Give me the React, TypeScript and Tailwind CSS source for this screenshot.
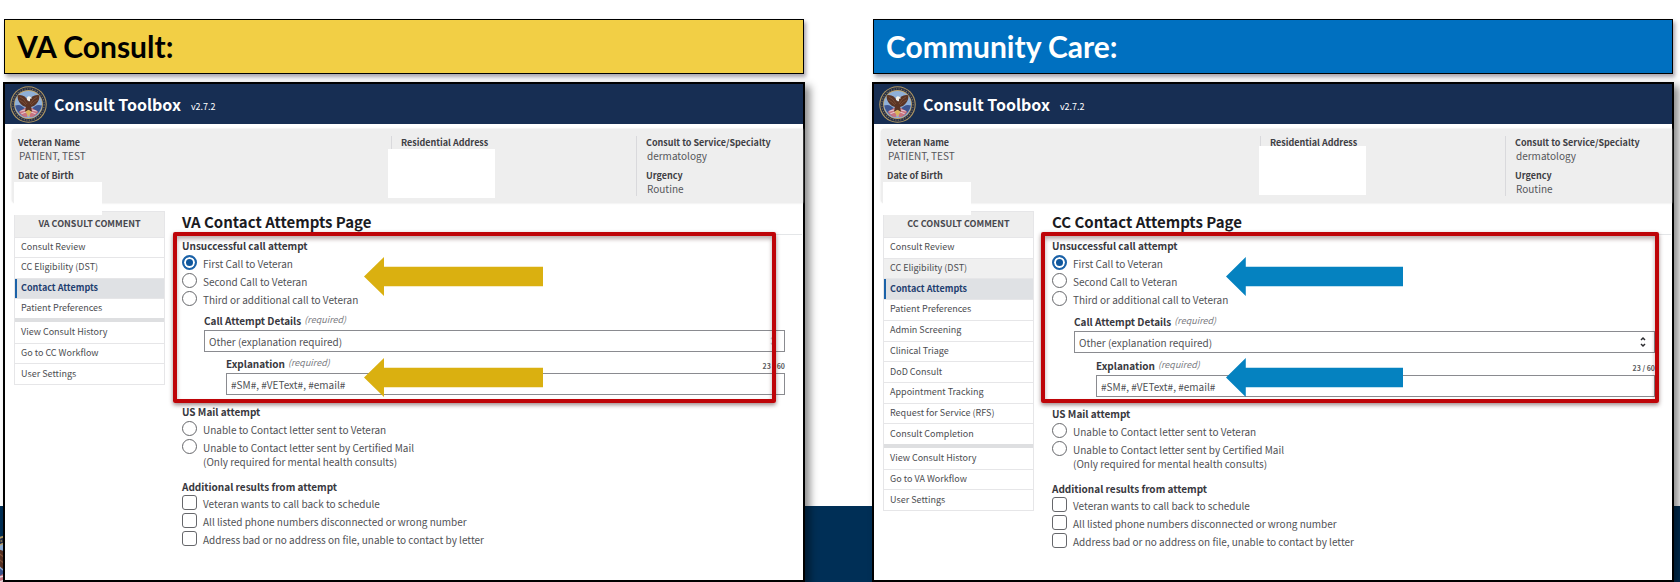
import { useState } from "react";

type Tone = "va" | "cc";

interface PanelData {
  tone: Tone;
  banner: string;
  navTitle: string;
  pages: string[];
  hovered?: string;
  links: string[];
  title: string;
}

const panels: PanelData[] = [
  {
    tone: "va",
    banner: "VA Consult:",
    navTitle: "VA CONSULT COMMENT",
    pages: ["Consult Review", "CC Eligibility (DST)", "Contact Attempts", "Patient Preferences"],
    links: ["View Consult History", "Go to CC Workflow", "User Settings"],
    title: "VA Contact Attempts Page",
  },
  {
    tone: "cc",
    banner: "Community Care:",
    navTitle: "CC CONSULT COMMENT",
    pages: [
      "Consult Review",
      "CC Eligibility (DST)",
      "Contact Attempts",
      "Patient Preferences",
      "Admin Screening",
      "Clinical Triage",
      "DoD Consult",
      "Appointment Tracking",
      "Request for Service (RFS)",
      "Consult Completion",
    ],
    hovered: "CC Eligibility (DST)",
    links: ["View Consult History", "Go to VA Workflow", "User Settings"],
    title: "CC Contact Attempts Page",
  },
];

function Seal({ className }: { className: string }) {
  return (
    <svg viewBox="0 0 72 72" className={className} aria-hidden="true">
      <circle cx="36" cy="36" r="35.5" fill="#b59a62" />
      <circle cx="36" cy="36" r="33.5" fill="#25304a" />
      <circle cx="36" cy="36" r="30.5" fill="none" stroke="#8d7a54" strokeWidth="2" strokeDasharray="2 3" />
      <circle cx="36" cy="36" r="28" fill="#c0a56c" />
      <circle cx="36" cy="36" r="26.5" fill="#8fb0d8" />
      <path d="M10 38 Q22 34 30 46 L28 60 Q13 54 10 38Z" fill="#3d5590" />
      <path d="M62 38 Q50 34 42 46 L44 60 Q59 54 62 38Z" fill="#3d5590" />
      <path d="M17 50 L31 42 L34 61 Q24 61 17 50Z" fill="#c9737f" />
      <path d="M55 50 L41 42 L38 61 Q48 61 55 50Z" fill="#c9737f" />
      <path d="M20 49 L32 46 M22 54 L33 50 M52 49 L40 46 M50 54 L39 50" stroke="#eadfe4" strokeWidth="1.6" />
      <path d="M36 30 Q28 15 15 18 Q14 28 21 35 Q26 41 31 41 L29 50 L36 47 L43 50 L41 41 Q46 41 51 35 Q58 28 57 18 Q44 15 36 30Z" fill="#5a3425" />
      <path d="M19 21 Q27 24 33 35 M18 27 Q25 30 31 37 M53 21 Q45 24 39 35 M54 27 Q47 30 41 37" fill="none" stroke="#8a5a3e" strokeWidth="1.3" />
      <path d="M33 27 Q32 20 37 20 Q41 21 43 24 L39 25 L39 30Z" fill="#f1eee6" />
      <path d="M30 50 L36 46 L42 50 L36 60Z" fill="#d9b45c" />
    </svg>
  );
}

function Arrow({ className }: { className: string }) {
  return (
    <svg viewBox="0 0 179 40" preserveAspectRatio="none" className={className} aria-hidden="true">
      <path d="M0 20 L20 0 V10 H179 V30 H20 V40Z" fill="currentColor" />
    </svg>
  );
}

function Choice({
  type,
  name,
  label,
  note,
  defaultChecked,
}: {
  type: "radio" | "checkbox";
  name: string;
  label: string;
  note?: string;
  defaultChecked?: boolean;
}) {
  const shape =
    type === "radio"
      ? "rounded-full checked:border-2 checked:border-[#1b62a8] checked:bg-[#0f569c] checked:shadow-[inset_0_0_0_2px_white]"
      : "rounded-[3px] checked:bg-[#0f569c]";
  return (
    <label className="block text-[10px] text-[#505155]">
      <span className={`flex items-center gap-[6px] ${type === "radio" ? "h-[18px]" : "h-[17px]"}`}>
        <input
          type={type}
          name={name}
          defaultChecked={defaultChecked}
          className={`mb-[2px] size-[15px] shrink-0 appearance-none border border-[#66676b] bg-white ${shape}`}
        />
        {label}
      </span>
      {note && <span className="-mt-px block pl-[21px] leading-[14px]">{note}</span>}
    </label>
  );
}

function Fact({ label, value }: { label: string; value?: string }) {
  return (
    <div>
      <dt className="text-[9px] leading-[13px] font-bold text-[#3f3f45]">{label}</dt>
      {value && <dd className="pl-px text-[10px] leading-[13px] text-[#56575b]">{value}</dd>}
    </div>
  );
}

function PatientSummary({ tone }: { tone: Tone }) {
  const cc = tone === "cc";
  return (
    <dl className="mt-[5px] ml-[7px] grid h-[74px] grid-cols-[379fr_245fr_167fr] grid-rows-[60px] rounded-l bg-[#eeeeee] py-[7px] shadow-[0_0_2px_#d8d8d8]">
      <div className="flex flex-col gap-[7px] pl-[6px]">
        <Fact label="Veteran Name" value="PATIENT, TEST" />
        <div>
          <Fact label="Date of Birth" />
          <div className="relative -ml-1 h-[33px] w-[88px] bg-white" />
        </div>
      </div>
      <div>
        <div className="border-l border-[#d9d9dc] pl-[9px]">
          <Fact label="Residential Address" />
        </div>
        <div className={`relative h-[49px] w-[107px] bg-white ${cc ? "-mt-[3px] -ml-px" : "-ml-[3px]"}`} />
      </div>
      <div className="flex flex-col gap-[7px] border-l border-[#d9d9dc] pl-[9px]">
        <Fact label="Consult to Service/Specialty" value="dermatology" />
        <Fact label="Urgency" value="Routine" />
      </div>
    </dl>
  );
}

function SideNav({ data }: { data: PanelData }) {
  const groupHeight = data.tone === "va" ? "h-[81px]" : "h-[207px]";
  return (
    <nav className="w-[151px] shrink-0 self-start border border-[#e6e6e8] text-[9px] leading-[14px] text-[#4c4d51]">
      <h3 className="flex h-[25px] items-center justify-center bg-[#eeeeee] pb-[2px] font-bold text-[#47474d]">
        {data.navTitle}
      </h3>
      <ul className={`grid auto-rows-fr ${groupHeight}`}>
        {data.pages.map((page) => {
          const state =
            page === "Contact Attempts"
              ? "border-l-2 border-l-[#1b62a8] bg-[#dfe1e4] pl-1 font-bold text-[#1f3f70]"
              : page === data.hovered
                ? "bg-[#f0f0f0] pl-[6px]"
                : "pl-[6px]";
          return (
            <li key={page} className="flex border-t border-[#e6e6e8]">
              <a href="#" className={`flex flex-1 items-center pb-px ${state}`}>
                {page}
              </a>
            </li>
          );
        })}
      </ul>
      <ul className="grid h-[66px] auto-rows-fr border-t-4 border-[#dedfe1]">
        {data.links.map((link, i) => (
          <li key={link} className={`flex ${i > 0 ? "border-t border-[#e6e6e8]" : ""}`}>
            <a href="#" className="flex flex-1 items-center pb-px pl-[6px]">
              {link}
            </a>
          </li>
        ))}
      </ul>
    </nav>
  );
}

function ContactForm({ data }: { data: PanelData }) {
  const { tone } = data;
  const [explanation, setExplanation] = useState("#SM#, #VEText#, #email#");
  const cc = tone === "cc";
  const legend = "block h-[17px] text-[10px] leading-[17px] font-bold text-[#38383e]";
  const field = "h-[22px] w-full border border-[#8a8b90] bg-white px-[4px] text-[10px] text-[#505155]";
  const fieldLabel = "flex h-5 items-center gap-[3px] text-[10px] font-bold text-[#38383e]";
  const required = <span className="text-[9px] font-normal text-[#7c7d82] italic">(required)</span>;
  return (
    <main className="min-w-0 flex-1">
      <h2 className="h-6 border-b border-[#e4e6e8] text-[15px] leading-[21px] font-bold text-[#1b1b1f]">
        {data.title}
      </h2>
      <div className={cc ? "pr-4" : "pr-[17px]"}>
        <fieldset className="mt-[2px]">
          <legend className={legend}>Unsuccessful call attempt</legend>
          <Choice type="radio" name={`${tone}-call`} label="First Call to Veteran" defaultChecked />
          <Choice type="radio" name={`${tone}-call`} label="Second Call to Veteran" />
          <Choice type="radio" name={`${tone}-call`} label="Third or additional call to Veteran" />
          <div className={`pl-[22px] ${cc ? "pt-[3px]" : "pt-[2px]"}`}>
            <label htmlFor={`${tone}-details`} className={fieldLabel}>
              Call Attempt Details {required}
            </label>
            <div className="grid items-center">
              <select id={`${tone}-details`} className={`${field} col-start-1 row-start-1 appearance-none`}>
                <option>Other (explanation required)</option>
              </select>
              <svg
                viewBox="0 0 8 12"
                className={`pointer-events-none col-start-1 row-start-1 mr-2 h-3 w-2 justify-self-end ${cc ? "text-[#2c2c30]" : "text-[#c8c8cc]"}`}
                aria-hidden="true"
              >
                <path d="M2 4 L4 2 L6 4 M2 8 L4 10 L6 8" fill="none" stroke="currentColor" strokeWidth="1.5" />
              </svg>
            </div>
            <div className={`pl-[22px] ${cc ? "pt-[2px]" : "pt-px"}`}>
              <div className="flex justify-between">
                <label htmlFor={`${tone}-explanation`} className={fieldLabel}>
                  Explanation {required}
                </label>
                <span className="self-end text-[7px] leading-[14px] font-bold text-[#5b5c60]">{explanation.length} / 60</span>
              </div>
              <input
                id={`${tone}-explanation`}
                type="text"
                maxLength={60}
                value={explanation}
                onChange={(e) => setExplanation(e.target.value)}
                className={`${field} block`}
              />
            </div>
          </div>
        </fieldset>
        <fieldset className="mt-2">
          <legend className={legend}>US Mail attempt</legend>
          <Choice type="radio" name={`${tone}-mail`} label="Unable to Contact letter sent to Veteran" />
          <Choice
            type="radio"
            name={`${tone}-mail`}
            label="Unable to Contact letter sent by Certified Mail"
            note="(Only required for mental health consults)"
          />
        </fieldset>
        <fieldset className="mt-[9px]">
          <legend className={legend}>Additional results from attempt</legend>
          <div className="flex flex-col gap-px">
            {[
              "Veteran wants to call back to schedule",
              "All listed phone numbers disconnected or wrong number",
              "Address bad or no address on file, unable to contact by letter",
            ].map((label) => (
              <Choice key={label} type="checkbox" name={`${tone}-result`} label={label} />
            ))}
          </div>
        </fieldset>
      </div>
    </main>
  );
}

function Panel({ data }: { data: PanelData }) {
  const cc = data.tone === "cc";
  return (
    <section className="flex min-w-0 flex-1 flex-col gap-2">
      <h1
        className={`mx-px flex h-[55px] items-center border border-black px-3 font-['Lato',sans-serif] text-[30px] font-bold shadow-[2px_3px_4px_rgba(60,50,70,0.45)] ${
          cc ? "bg-[#0070c0] text-white" : "bg-[#f2cf45] text-black"
        }`}
      >
        {data.banner}
      </h1>
      <div className="relative flex-1 border-2 border-black bg-white shadow-[5px_4px_8px_rgba(0,0,0,0.45)]">
        <header className="flex h-10 items-center bg-[#172e53] pl-[5px] text-white">
          <Seal className="mr-[7px] size-[37px]" />
          <span className="mr-[10px] text-[16px] leading-6 font-bold">Consult Toolbox</span>
          <span className="pt-[5px] text-[9px]">v2.7.2</span>
        </header>
        <PatientSummary tone={data.tone} />
        <div className={`mt-2 flex pr-px pb-4 pl-[9px] ${cc ? "gap-[18px]" : "gap-[17px]"}`}>
          <SideNav data={data} />
          <ContactForm data={data} />
        </div>
        <div
          className={`pointer-events-none absolute top-[148px] h-[171px] rounded-[2px] border-4 border-[#be0408] shadow-[0_2px_4px_rgba(60,20,20,0.5),inset_0_3px_4px_rgba(60,20,20,0.35)] ${
            cc ? "right-[13px] left-[167px]" : "right-[27px] left-[168px]"
          }`}
        />
        <Arrow
          className={`pointer-events-none absolute top-[173px] h-[39px] ${cc ? "left-[352px] w-[177px] text-[#0582c0]" : "left-[359px] w-[179px] text-[#dab010]"}`}
        />
        <Arrow
          className={`pointer-events-none absolute top-[274px] h-[39px] ${cc ? "left-[352px] w-[177px] text-[#0582c0]" : "left-[359px] w-[179px] text-[#dab010]"}`}
        />
      </div>
    </section>
  );
}

export default function App() {
  return (
    <div className="relative isolate flex min-h-screen overflow-hidden bg-white font-['Noto_Sans_CJK_SC','Noto_Sans',sans-serif]">
      <div className="absolute inset-x-0 bottom-0 -z-10 h-[76px] bg-[#002f56]">
        <Seal className="absolute -left-5 bottom-[-16px] size-16" />
      </div>
      <div className="flex flex-1 gap-[67px] pt-[19px] pr-[6px] pl-[3px]">
        {panels.map((data) => (
          <Panel key={data.tone} data={data} />
        ))}
      </div>
    </div>
  );
}
